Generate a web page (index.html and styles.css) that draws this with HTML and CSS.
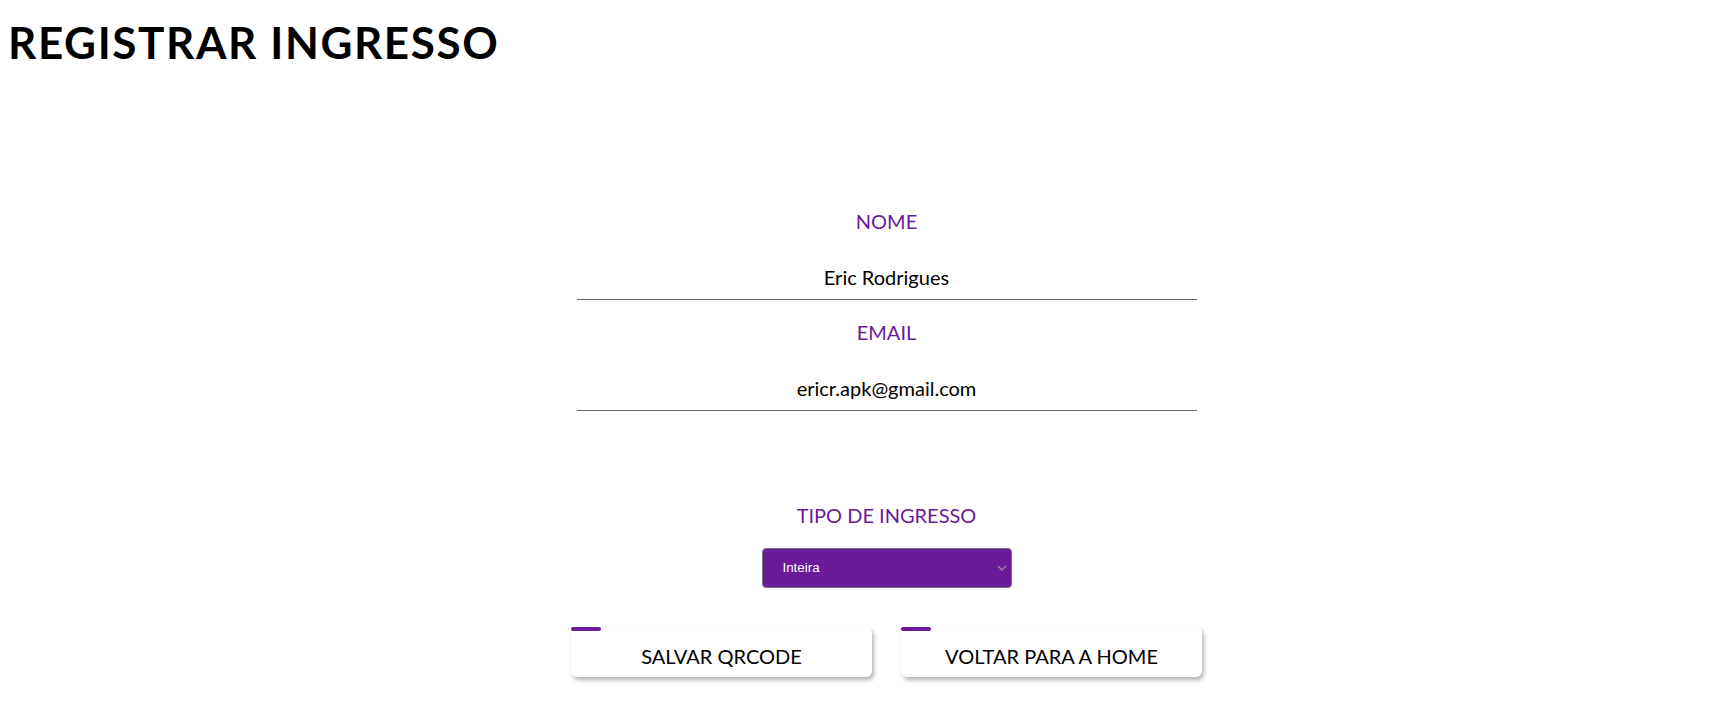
FILE: index.html
```html
<!DOCTYPE html>
<html lang="pt-BR">
<head>
<meta charset="utf-8">
<title>Registrar Ingresso</title>
<link rel="stylesheet" href="styles.css">
</head>
<body>
<h1 class="page-title">REGISTRAR INGRESSO</h1>
<main class="main">
  <form class="form">
    <div class="field">
      <label class="field-label" for="nome">NOME</label>
      <input class="field-input" id="nome" type="text" value="Eric Rodrigues">
    </div>
    <div class="field">
      <label class="field-label" for="email">EMAIL</label>
      <input class="field-input" id="email" type="email" value="ericr.apk@gmail.com">
    </div>
    <div class="field field-select">
      <label class="field-label" for="tipo">TIPO DE INGRESSO</label>
      <div class="select-wrap">
        <select class="select" id="tipo">
          <option>Inteira</option>
          <option>Meia</option>
        </select>
        <svg class="select-arrow" width="10" height="6" viewBox="0 0 10 6"><path d="M1 1 L5 5 L9 1" fill="none" stroke="#9a8aa6" stroke-width="1.3"/></svg>
      </div>
    </div>
    <div class="actions">
      <button type="button" class="btn">SALVAR QRCODE</button>
      <button type="button" class="btn">VOLTAR PARA A HOME</button>
    </div>
  </form>
</main>
</body>
</html>
```
FILE: styles.css
```css
* { box-sizing: border-box; }

body {
  margin: 0;
  padding: 8px;
  font-family: Lato, "Noto Sans", sans-serif;
  color: #000;
  background: #fff;
}

.page-title {
  margin: 8px 0 0;
  font-size: 44px;
  font-weight: 700;
  line-height: 1.2;
  letter-spacing: 1.6px;
}

.main {
  display: flex;
  flex-direction: column;
  align-items: center;
  padding-left: 60px;
  padding-top: 140px;
}

.form {
  width: 620px;
  display: flex;
  flex-direction: column;
  align-items: center;
}

.field {
  width: 100%;
  display: flex;
  flex-direction: column;
  align-items: center;
  margin-bottom: 20px;
}

.field-label {
  font-size: 20px;
  line-height: 24px;
  color: #6a1b9a;
  margin-bottom: 22px;
}

.field-input {
  width: 100%;
  font-family: Lato, "Noto Sans", sans-serif;
  font-size: 20px;
  line-height: 24px;
  padding: 10px 0;
  border: none;
  border-bottom: 1px solid #666;
  text-align: center;
  color: #000;
  outline: none;
  background: transparent;
}

.field-select {
  margin-top: 72px;
  margin-bottom: 39px;
}

.field-select .field-label {
  margin-bottom: 21px;
}

.select-wrap {
  position: relative;
  width: 250px;
}

.select {
  width: 100%;
  height: 40px;
  appearance: none;
  -webkit-appearance: none;
  background: #6a1b9a;
  color: #fff;
  border: 1px solid #767676;
  border-radius: 4px;
  padding: 0 20px;
  font-family: "Liberation Sans", Arial, sans-serif;
  font-size: 13.33px;
  outline: none;
}

.select-arrow {
  position: absolute;
  right: 5px;
  top: 17px;
  pointer-events: none;
}

.actions {
  display: flex;
  justify-content: center;
  gap: 29px;
  width: 631px;
}

.btn {
  position: relative;
  width: 301px;
  height: 50px;
  padding: 17px 0 9px;
  background: #fff;
  border: none;
  border-radius: 6px;
  box-shadow: 2px 3px 4px rgba(0, 0, 0, 0.3);
  font-family: Lato, "Noto Sans", sans-serif;
  font-size: 20px;
  line-height: 24px;
  color: #000;
  cursor: pointer;
}

.btn::before {
  content: "";
  position: absolute;
  left: 0;
  top: 0;
  width: 30px;
  height: 4px;
  border-radius: 2px;
  background: #6a1b9a;
}
```
